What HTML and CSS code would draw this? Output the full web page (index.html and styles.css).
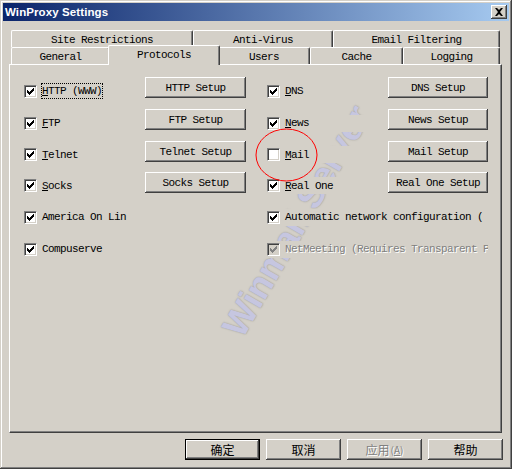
FILE: index.html
```html
<!DOCTYPE html>
<html lang="en">
<head>
    <meta charset="UTF-8">
    <title>WinProxy Settings</title>
    <link rel="stylesheet" href="styles.css">
</head>
<body>
    <div class="window">
        <div class="titlebar">
            <span class="title">WinProxy Settings</span>
            <span class="close-btn">
                <svg width="12" height="10" viewBox="0 0 12 10"><path d="M2 1h2l2 2 2-2h2L7 5l3 4H8L6 7 4 9H2l3-4z" fill="#000"/></svg>
            </span>
        </div>

        <div class="tabs">
            <div class="tab-row">
                <div class="tab w-site">Site Restrictions</div>
                <div class="tab w-av">Anti-Virus</div>
                <div class="tab w-mail">Email Filtering</div>
            </div>
            <div class="tab-row">
                <div class="tab w-general">General</div>
                <div class="tab active w-proto">Protocols</div>
                <div class="tab w-users">Users</div>
                <div class="tab w-cache">Cache</div>
                <div class="tab w-log">Logging</div>
            </div>
        </div>

        <div class="panel">
            <div class="proto-grid">
                <!-- row 1 -->
                <div class="opt"><span class="check"><svg viewBox="1 1 11 11"><path class="tick" d="M3 5h1v1h1v1h1V6h1V5h1V4h1V3h1v3H9v1H8v1H7v1H6v1H5V9H4V8H3z"/></svg></span><span class="label focus"><u>H</u>TTP (WWW)</span></div>
                <div class="btn">HTTP Setup</div>
                <div></div>
                <div class="opt"><span class="check"><svg viewBox="1 1 11 11"><path class="tick" d="M3 5h1v1h1v1h1V6h1V5h1V4h1V3h1v3H9v1H8v1H7v1H6v1H5V9H4V8H3z"/></svg></span><span class="label"><u>D</u>NS</span></div>
                <div class="btn">DNS Setup</div>

                <!-- row 2 -->
                <div class="opt"><span class="check"><svg viewBox="1 1 11 11"><path class="tick" d="M3 5h1v1h1v1h1V6h1V5h1V4h1V3h1v3H9v1H8v1H7v1H6v1H5V9H4V8H3z"/></svg></span><span class="label"><u>F</u>TP</span></div>
                <div class="btn">FTP Setup</div>
                <div></div>
                <div class="opt"><span class="check"><svg viewBox="1 1 11 11"><path class="tick" d="M3 5h1v1h1v1h1V6h1V5h1V4h1V3h1v3H9v1H8v1H7v1H6v1H5V9H4V8H3z"/></svg></span><span class="label"><u>N</u>ews</span></div>
                <div class="btn">News Setup</div>

                <!-- row 3 -->
                <div class="opt"><span class="check"><svg viewBox="1 1 11 11"><path class="tick" d="M3 5h1v1h1v1h1V6h1V5h1V4h1V3h1v3H9v1H8v1H7v1H6v1H5V9H4V8H3z"/></svg></span><span class="label"><u>T</u>elnet</span></div>
                <div class="btn">Telnet Setup</div>
                <div></div>
                <div class="opt"><span class="check"></span><span class="label"><u>M</u>ail</span></div>
                <div class="btn">Mail Setup</div>

                <!-- row 4 -->
                <div class="opt"><span class="check"><svg viewBox="1 1 11 11"><path class="tick" d="M3 5h1v1h1v1h1V6h1V5h1V4h1V3h1v3H9v1H8v1H7v1H6v1H5V9H4V8H3z"/></svg></span><span class="label"><u>S</u>ocks</span></div>
                <div class="btn">Socks Setup</div>
                <div></div>
                <div class="opt"><span class="check"><svg viewBox="1 1 11 11"><path class="tick" d="M3 5h1v1h1v1h1V6h1V5h1V4h1V3h1v3H9v1H8v1H7v1H6v1H5V9H4V8H3z"/></svg></span><span class="label"><u>R</u>eal One</span></div>
                <div class="btn">Real One Setup</div>

                <!-- row 5 -->
                <div class="opt wide-left"><span class="check"><svg viewBox="1 1 11 11"><path class="tick" d="M3 5h1v1h1v1h1V6h1V5h1V4h1V3h1v3H9v1H8v1H7v1H6v1H5V9H4V8H3z"/></svg></span><span class="label">America On Lin</span></div>
                <div class="opt wide-right"><span class="check"><svg viewBox="1 1 11 11"><path class="tick" d="M3 5h1v1h1v1h1V6h1V5h1V4h1V3h1v3H9v1H8v1H7v1H6v1H5V9H4V8H3z"/></svg></span><span class="label">Automatic network configuration (</span></div>

                <!-- row 6 -->
                <div class="opt wide-left"><span class="check"><svg viewBox="1 1 11 11"><path class="tick" d="M3 5h1v1h1v1h1V6h1V5h1V4h1V3h1v3H9v1H8v1H7v1H6v1H5V9H4V8H3z"/></svg></span><span class="label">Compuserve</span></div>
                <div class="opt wide-right disabled"><span class="check"><svg viewBox="1 1 11 11"><path class="tick" d="M3 5h1v1h1v1h1V6h1V5h1V4h1V3h1v3H9v1H8v1H7v1H6v1H5V9H4V8H3z"/></svg></span><span class="label">NetMeeting (Requires Transparent P</span></div>
            </div>
        </div>

        <div class="dialog-buttons">
            <div class="btn cjk default">确定</div>
            <div class="btn cjk">取消</div>
            <div class="btn cjk off">应用<span class="acc">(<u>A</u>)</span></div>
            <div class="btn cjk">帮助</div>
        </div>

        <!-- page background mark, sits under the controls -->
        <div class="watermark">Winmail Server</div>

        <svg class="ring" width="64" height="56" viewBox="0 0 64 56">
            <ellipse cx="31.5" cy="27" rx="30.5" ry="26" fill="none" stroke="#f00" stroke-width="1"/>
        </svg>
    </div>
</body>
</html>
```

FILE: styles.css
```css
* {
    box-sizing: border-box;
}
body {
    margin: 0;
    background: #d4d0c8;
    font-family: "Liberation Mono", "DejaVu Sans Mono", monospace;
    font-size: 11px;
    letter-spacing: -0.6px;
    color: #000;
}
.window {
    position: relative;
    width: 512px;
    height: 469px;
    padding: 3px;
    background: #d4d0c8;
    box-shadow: inset -1px -1px #404040, inset 1px 1px #d4d0c8, inset -2px -2px #808080, inset 2px 2px #fff;
    overflow: hidden;
}

/* caption */
.titlebar {
    display: flex;
    align-items: center;
    justify-content: space-between;
    height: 18px;
    padding: 0 2px;
    background: linear-gradient(to right, #0a246a, #a6caf0);
}
.title {
    font-family: "Liberation Sans", Arial, sans-serif;
    font-weight: bold;
    font-size: 11.5px;
    letter-spacing: 0.1px;
    color: #fff;
}
.close-btn {
    display: flex;
    align-items: center;
    justify-content: center;
    width: 16px;
    height: 14px;
    background: #d4d0c8;
    box-shadow: inset -1px -1px #404040, inset 1px 1px #fff, inset -2px -2px #808080;
}
.close-btn svg {
    display: block;
}

/* tab strip */
.tabs {
    margin-top: 9px;
    padding-left: 8px;
}
.tab-row {
    display: flex;
    height: 17px;
}
.tab {
    display: flex;
    align-items: center;
    justify-content: center;
    flex: none;
    height: 17px;
    padding-top: 1px;
    background: #d4d0c8;
    border-top: 1px solid #fff;
    border-left: 1px solid #fff;
    border-right: 1px solid #404040;
    border-radius: 2px 2px 0 0;
    box-shadow: inset -1px 0 #808080;
    white-space: nowrap;
}
.tab.active {
    position: relative;
    z-index: 2;
    height: 20px;
    margin: -2px -2px 0;
    align-items: flex-start;
    padding-top: 3px;
}
.w-site { width: 182px; }
.w-av { width: 140px; }
.w-mail { width: 167px; }
.w-general { width: 99px; }
.w-proto { width: 112px; }
.w-users { width: 92px; }
.w-cache { width: 93px; }
.w-log { width: 97px; }

/* page body */
.panel {
    width: 493px;
    height: 369px;
    margin-left: 6px;
    padding: 10px 0 0 14px;
    border: 1px solid;
    border-color: #fff #404040 #404040 #fff;
    box-shadow: inset -1px -1px #808080;
}
.proto-grid {
    position: relative;
    z-index: 1;
    display: grid;
    grid-template-columns: 121px 101px 21px 121px 100px;
    grid-template-rows: 32px 32px 31px 31px 32px 32px;
}
/* each check control paints its own face, so the mark only shows between rows */
.opt {
    display: flex;
    align-items: center;
    align-self: center;
    height: 17px;
    min-width: 0;
    background: #d4d0c8;
}
.wide-left {
    grid-column: 1 / 4;
    background: none;
}
.wide-right {
    grid-column: 4 / 6;
    overflow: hidden;
}
.check {
    flex: none;
    width: 13px;
    height: 13px;
    background: #fff;
    border: 1px solid;
    border-color: #808080 #fff #fff #808080;
    box-shadow: inset 1px 1px #404040, inset -1px -1px #d4d0c8;
}
.check svg {
    display: block;
    width: 11px;
    height: 11px;
    shape-rendering: crispEdges;
}
.tick {
    fill: #000;
}
.label {
    margin-left: 4px;
    padding: 1px 0 1px;
    border: 1px solid transparent;
    white-space: nowrap;
}
.label.focus {
    border: 1px dotted #000;
}
.disabled .check {
    background: #d4d0c8;
}
.disabled .tick {
    fill: #808080;
}
.disabled .label {
    color: #808080;
    text-shadow: 1px 1px #fff;
}

/* push buttons */
.btn {
    display: flex;
    align-items: center;
    justify-content: center;
    height: 21px;
    background: #d4d0c8;
    box-shadow: inset -1px -1px #404040, inset 1px 1px #fff, inset -2px -2px #808080;
    white-space: nowrap;
}
.proto-grid .btn {
    align-self: start;
    margin-top: 2px;
}
.dialog-buttons {
    display: flex;
    justify-content: flex-end;
    gap: 6px;
    margin-top: 6px;
    padding-right: 6px;
}
.dialog-buttons .btn {
    width: 75px;
}
.cjk {
    font-family: "Noto Sans CJK SC", sans-serif;
    font-size: 12px;
    letter-spacing: 0;
}
.btn.default {
    box-shadow: inset 0 0 0 1px #000, inset -2px -2px #404040, inset 2px 2px #fff, inset -3px -3px #808080;
}
.btn.off {
    color: #808080;
    text-shadow: 1px 1px #fff;
}
.acc {
    font-size: 10px;
    margin-left: 1px;
}

/* overlays */
.watermark {
    position: absolute;
    z-index: 0;
    left: 297px;
    top: 221px;
    transform: translate(-50%, -50%) rotate(-60deg);
    font-family: "Liberation Sans", Arial, sans-serif;
    font-weight: bold;
    font-size: 36px;
    letter-spacing: 0;
    color: #c6c6e0;
    text-shadow: 0 0 2px #aaa8a0, 0 0 1px #aaa8a0;
    white-space: nowrap;
    pointer-events: none;
}
.ring {
    position: absolute;
    z-index: 3;
    left: 255px;
    top: 128px;
    pointer-events: none;
}
```
